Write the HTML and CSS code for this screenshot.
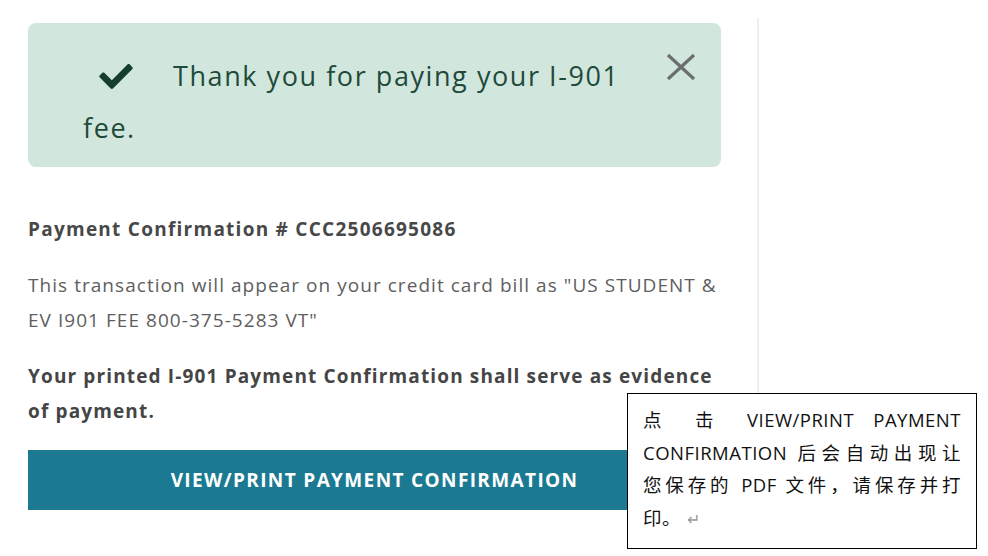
FILE: index.html
```html
<!DOCTYPE html>
<html>
<head>
<meta charset="utf-8">
<link rel="stylesheet" href="styles.css">
</head>
<body>
<div class="page">
  <main class="main">
    <div class="alert">
      <p class="alert-text"><svg class="check" viewBox="0 64 512 384" width="34" height="25"><path d="M173.9 439.4l-166.4-166.4c-10-10-10-26.2 0-36.2l36.2-36.2c10-10 26.2-10 36.2 0L192 312.7 432.1 72.6c10-10 26.2-10 36.2 0l36.2 36.2c10 10 10 26.2 0 36.2l-294.4 294.4c-10 10-26.2 10-36.2 0z" fill="#153f2c"/></svg>Thank you for paying your I-901 fee.</p>
      <span class="close"><svg viewBox="0 0 30 28" width="30" height="28"><path d="M2 2L28 26M28 2L2 26" stroke="#6b6f6d" stroke-width="3.2" fill="none"/></svg></span>
    </div>
    <h3 class="conf">Payment Confirmation # CCC2506695086</h3>
    <p class="txt">This transaction will appear on your credit card bill as "US STUDENT &amp; EV I901 FEE 800-375-5283 VT"</p>
    <p class="txt strong">Your printed I-901 Payment Confirmation shall serve as evidence of payment.</p>
    <button class="btn">VIEW/PRINT PAYMENT CONFIRMATION</button>
  </main>
  <aside class="side"></aside>
</div>
<div class="note">
  <span class="ln">点 击 VIEW/PRINT PAYMENT</span>
  <span class="ln">CONFIRMATION 后会自动出现让</span>
  <span class="ln">您保存的 PDF 文件，请保存并打</span>
  <span class="ln last">印。<span class="ret">↵</span></span>
</div>
</body>
</html>
```

FILE: styles.css
```css
html, body {
  margin: 0;
  padding: 0;
  background: #fff;
}
body {
  font-family: "Open Sans", "Noto Sans", sans-serif;
  width: 988px;
  height: 556px;
  overflow: hidden;
  position: relative;
}
.page {
  display: flex;
  padding: 23px 0 0 28px;
}
.main {
  width: 693px;
}
.side {
  margin-left: 36px;
  margin-top: -5px;
  width: 0;
  height: 400px;
  border-left: 2px solid #eeeff0;
}
.alert {
  position: relative;
  background: #d1e7dd;
  border-radius: 8px;
  padding: 27px 90px 12px 55px;
  height: 105px;
}
.alert-text {
  margin: 0;
  color: #1f4a3a;
  font-size: 27px;
  line-height: 52px;
  letter-spacing: 0.058em;
}
.check {
  vertical-align: -3px;
  margin: 0 40px 0 16px;
}
.close {
  position: absolute;
  right: 25px;
  top: 30px;
  display: block;
}
.close svg {
  display: block;
}
.conf {
  margin: 44px 0 0;
  font-size: 19px;
  line-height: 36px;
  font-weight: 700;
  color: #484848;
  letter-spacing: 0.066em;
}
.txt {
  margin: 21px 0 0;
  font-size: 19px;
  line-height: 35px;
  color: #5e5e5e;
  letter-spacing: 0.055em;
}
.txt.strong {
  font-weight: 700;
  color: #454545;
  margin-top: 21px;
  letter-spacing: 0.06em;
}
.btn {
  display: block;
  width: 100%;
  height: 60px;
  margin-top: 21px;
  border: 0;
  background: #1b7a91;
  color: #fff;
  font-family: "Open Sans", sans-serif;
  font-weight: 700;
  font-size: 19px;
  letter-spacing: 0.072em;
  padding: 0;
}
.note {
  position: absolute;
  left: 627px;
  top: 393px;
  width: 318px;
  height: 144px;
  padding: 10px 15px 0 15px;
  border: 1px solid #000;
  background: #fff;
  font-family: "Open Sans", "Noto Sans CJK SC", sans-serif;
  font-size: 18.5px;
  line-height: 32.7px;
  color: #111;
  letter-spacing: 0.5px;
}
.ln {
  display: block;
  text-align: justify;
  text-align-last: justify;
  white-space: nowrap;
}
.ln.last {
  text-align-last: left;
}
.ret {
  color: #999;
  margin-left: 6px;
  font-size: 16px;
}
```
